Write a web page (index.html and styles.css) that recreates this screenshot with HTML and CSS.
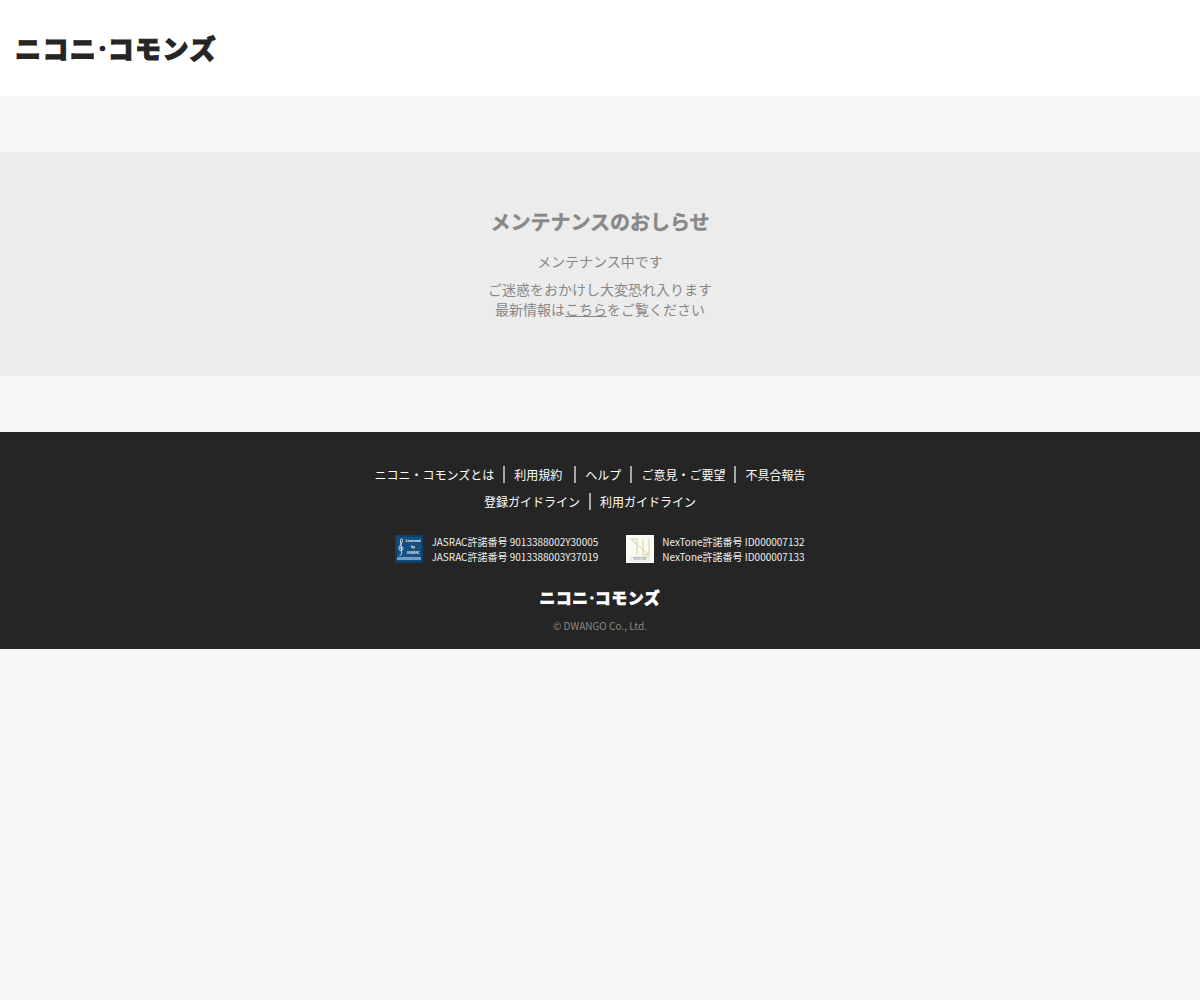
FILE: index.html
```html
<!DOCTYPE html>
<html lang="ja">
<head>
<meta charset="utf-8">
<title>ニコニ・コモンズ</title>
<link rel="stylesheet" href="styles.css">
</head>
<body>
<header class="site-header">
  <a class="logo" href="#">ニコニ<span class="logo-dot">・</span>コモンズ</a>
</header>
<main class="main">
  <section class="notice">
    <h1 class="notice-title">メンテナンスのおしらせ</h1>
    <p class="notice-lead">メンテナンス中です</p>
    <p class="notice-body">ご迷惑をおかけし大変恐れ入ります<br>最新情報は<a class="notice-link" href="#">こちら</a>をご覧ください</p>
  </section>
</main>
<footer class="site-footer">
  <ul class="foot-links">
    <li><a href="#">ニコニ・コモンズとは</a></li>
    <li class="wide"><a href="#">利用規約</a></li>
    <li><a href="#">ヘルプ</a></li>
    <li><a href="#">ご意見・ご要望</a></li>
    <li><a href="#">不具合報告</a></li>
  </ul>
  <ul class="foot-links second">
    <li><a href="#">登録ガイドライン</a></li>
    <li><a href="#">利用ガイドライン</a></li>
  </ul>
  <div class="licenses">
    <div class="license">
      <svg class="badge" viewBox="0 0 28 28" width="28" height="28">
        <rect width="28" height="28" fill="#123f66"/>
        <rect x="2" y="2" width="24" height="24" fill="#14507f"/>
        <rect x="2" y="22" width="24" height="3" fill="#6f9cc4"/>
        <path d="M4.500 20c2 1 2.500-1 2-5l-1-9c0-3 2-3 2-.5 0 3-3.500 5-3.500 8 0 3 4.500 2.500 4-.5-.4-2-3-1.500-2.500.5" fill="none" stroke="#dfe9f2" stroke-width=".9"/>
        <text x="18" y="7" class="badge-text">Licensed</text>
        <text x="18" y="13" class="badge-text">by</text>
        <text x="18" y="19" class="badge-text">JASRAC</text>
      </svg>
      <p class="license-text">JASRAC許諾番号 9013388002Y30005<br>JASRAC許諾番号 9013388003Y37019</p>
    </div>
    <div class="license">
      <svg class="badge" viewBox="0 0 28 28" width="28" height="28">
        <rect width="28" height="28" fill="#fbfbf6"/>
        <path d="M5 4h6v16M23 4v16h-6V4M5 4l18 16" fill="none" stroke="#d8cf96" stroke-width="1"/>
        <rect x="5" y="22" width="18" height="4" fill="none" stroke="#bbb" stroke-width=".4"/>
        <text x="14" y="25.200" class="badge-text dark">NEXTONE</text>
      </svg>
      <p class="license-text">NexTone許諾番号 ID000007132<br>NexTone許諾番号 ID000007133</p>
    </div>
  </div>
  <a class="logo logo-small" href="#">ニコニ<span class="logo-dot">・</span>コモンズ</a>
  <p class="copyright">© DWANGO Co., Ltd.</p>
</footer>
</body>
</html>
```
FILE: styles.css
```css
* { box-sizing: border-box; }
html, body { margin: 0; padding: 0; }
body {
  background: #f6f6f6;
  font-family: "Noto Sans CJK JP", "Noto Sans", sans-serif;
  color: #252525;
}
a { color: inherit; text-decoration: none; }
ul { list-style: none; margin: 0; padding: 0; }
p, h1 { margin: 0; }

.site-header {
  height: 96px;
  background: #fff;
  display: flex;
  align-items: center;
  padding: 0 0 0 15px;
}
.logo {
  display: block;
  font-size: 26px;
  line-height: 26px;
  letter-spacing: .055em;
  font-weight: 900;
  white-space: nowrap;
  color: #252525;
  -webkit-text-stroke: .04em currentColor;
}
.logo-dot {
  font-size: .4em;
  line-height: 0;
  letter-spacing: 0;
  vertical-align: .6em;
  -webkit-text-stroke: .25em currentColor;
}

.main { padding: 56px 0; }
.notice {
  height: 224px;
  background: #ececec;
  color: #888;
  text-align: center;
  padding-top: 56px;
}
.notice-title {
  font-size: 20px;
  line-height: 28px;
  font-weight: 700;
  -webkit-text-stroke: .4px currentColor;
}
.notice-lead {
  margin-top: 15px;
  font-size: 14px;
  line-height: 20px;
}
.notice-body {
  margin-top: 8px;
  font-size: 14px;
  line-height: 20px;
}
.notice-link { text-decoration: underline; }

.site-footer {
  height: 217px;
  background: #252525;
  color: #fff;
  padding-top: 30px;
  display: flex;
  flex-direction: column;
  align-items: center;
}
.foot-links {
  display: flex;
  justify-content: center;
  align-items: center;
  height: 24px;
  padding-right: 20px;
  font-size: 12px;
  line-height: 17px;
}
.foot-links.second { margin-top: 3px; }
.foot-links li + li {
  margin-left: 9px;
  padding-left: 9px;
  border-left: 2px solid #a8a8a8;
}
.foot-links li.wide { padding-right: 3px; }
.licenses {
  display: flex;
  gap: 28px;
  margin-top: 21px;
}
.license {
  display: flex;
  align-items: center;
  gap: 8px;
}
.badge { display: block; flex: none; }
.badge-text {
  font-size: 3.500px;
  font-weight: 700;
  fill: #e8eef4;
  text-anchor: middle;
}
.badge-text.dark { fill: #555; font-weight: 400; font-size: 3px; }
.license-text {
  font-size: 10px;
  line-height: 15px;
  color: #eee;
  white-space: nowrap;
}
.logo-small {
  margin-top: 23px;
  font-size: 15.600px;
  line-height: 20px;
  color: #fff;
}
.copyright {
  margin-top: 11px;
  font-size: 10px;
  line-height: 15px;
  color: #888;
}
```
